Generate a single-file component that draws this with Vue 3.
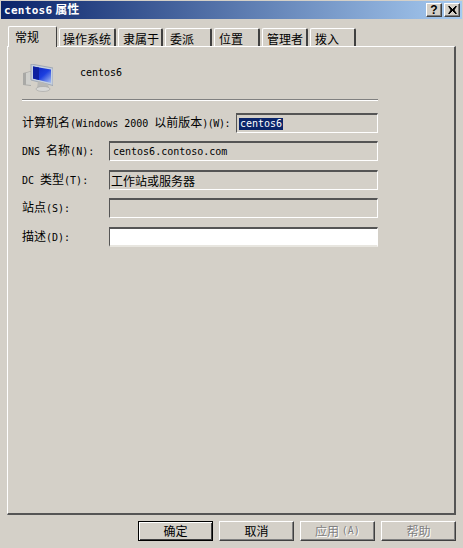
<script setup>
const tabs = [
  { label: '常规', w: 49, active: true },
  { label: '操作系统', w: 57 },
  { label: '隶属于', w: 45 },
  { label: '委派', w: 47 },
  { label: '位置', w: 46 },
  { label: '管理者', w: 46 },
  { label: '拨入', w: 46 }
]
</script>

<template>
  <div class="win">
    <div class="title">
      <div class="title-text"><span class="en bold">centos6</span> <span class="cn">属性</span></div>
      <div class="ctl-wrap">
        <div class="ctl">?</div>
        <div class="ctl x-ctl">
          <svg width="9" height="8" viewBox="0 0 9 8"><path d="M0 0h2v1h1v1h1v1h1V2h1V1h1V0h2L6.500 4 9 8H7V7H6V6H5V5H4v1H3v1H2v1H0l2.500-4z" fill="#000"/></svg>
        </div>
      </div>
    </div>

    <div class="tabs">
      <div v-for="t in tabs" :key="t.label" class="tab" :class="{ active: t.active }" :style="{ width: t.w + 'px' }">{{ t.label }}</div>
    </div>

    <div class="panel">
      <div class="head">
        <svg class="pc" width="30" height="28" viewBox="0 0 30 28">
          <defs>
            <linearGradient id="scr" x1="0" y1="0" x2="1" y2="1">
              <stop offset="0" stop-color="#0a1fb8"/>
              <stop offset="0.55" stop-color="#1c3fe0"/>
              <stop offset="1" stop-color="#a9c0f0"/>
            </linearGradient>
          </defs>
          <path d="M0 9l8-2v15l-8-1z" fill="#a9a9a6"/>
          <path d="M3 9l5-1.500V21l-5-.500z" fill="#d0d0cc"/>
          <path d="M8 0l22 4v17.500L8 16z" fill="#c6d0de" stroke="#8d97a8" stroke-width="0.700"/>
          <path d="M10 2.500l18 3V19L10 14.500z" fill="url(#scr)"/>
          <path d="M10 2.500l6 1V16l-6-1.500z" fill="#0d20a0"/>
          <path d="M15 17l10 3 1 4H14z" fill="#b8b8b6"/>
          <ellipse cx="20" cy="25" rx="7" ry="2.500" fill="#d8d8d6" stroke="#a4a4a2" stroke-width="0.600"/>
        </svg>
        <span class="en name">centos6</span>
      </div>
      <div class="divider"></div>

      <div class="row first">
        <label class="lab"><span class="cn">计算机名</span><span class="en">(Windows 2000 </span><span class="cn">以前版本</span><span class="en tight">)(W):</span></label>
        <div class="field short"><span class="en sel">centos6</span></div>
      </div>
      <div class="row r8">
        <label class="lab"><span class="en">DNS </span><span class="cn">名称</span><span class="en">(N):</span></label>
        <div class="field wide"><span class="en val">centos6.contoso.com</span></div>
      </div>
      <div class="row r9">
        <label class="lab"><span class="en">DC </span><span class="cn">类型</span><span class="en">(T):</span></label>
        <div class="field wide"><span class="cn">工作站或服务器</span></div>
      </div>
      <div class="row r8">
        <label class="lab"><span class="cn">站点</span><span class="en">(S):</span></label>
        <div class="field wide"></div>
      </div>
      <div class="row r9">
        <label class="lab"><span class="cn">描述</span><span class="en">(D):</span></label>
        <div class="field wide white"></div>
      </div>
    </div>

    <div class="buttons">
      <div class="btn default">确定</div>
      <div class="btn">取消</div>
      <div class="btn off">应用 <span class="en">(A)</span></div>
      <div class="btn off">帮助</div>
    </div>
  </div>
</template>

<style>
html, body { margin: 0; background: #d4d0c8; }
</style>

<style scoped>
.win {
  width: 463px;
  height: 548px;
  box-sizing: border-box;
  padding: 1px 1px 0;
  background: #d4d0c8;
  color: #000;
  font-family: "Noto Sans CJK SC", "DejaVu Sans Mono", sans-serif;
  font-size: 12px;
  display: flex;
  flex-direction: column;
  overflow: hidden;
}
.en { font-family: "DejaVu Sans Mono", "Liberation Mono", monospace; font-size: 10px; }
.cn { font-family: "Noto Sans CJK SC", sans-serif; font-size: 12px; }
.bold { font-weight: 700; font-size: 11px; letter-spacing: 0.300px; }
.tight { letter-spacing: -0.500px; }

.title {
  height: 18px;
  width: 461px;
  flex: none;
  display: flex;
  align-items: center;
  justify-content: space-between;
  background: linear-gradient(90deg, #0a246a, #a6caf0);
  color: #fff;
}
.title-text { padding-left: 3px; font-weight: 700; line-height: 18px; white-space: pre; }
.title-text .cn { font-weight: 700; font-size: 12px; }
.ctl-wrap { display: flex; gap: 2px; padding-right: 2px; }
.ctl {
  width: 16px;
  height: 14px;
  box-sizing: border-box;
  background: #d4d0c8;
  color: #000;
  border: 1px solid;
  border-color: #fff #404040 #404040 #fff;
  box-shadow: inset -1px -1px 0 #808080;
  font: 700 12px/12px "Liberation Sans", sans-serif;
  text-align: center;
}
.x-ctl { display: flex; align-items: center; justify-content: center; }

.tabs {
  display: flex;
  align-items: flex-end;
  gap: 2px;
  height: 27px;
  margin-left: 7px;
  flex: none;
  position: relative;
  z-index: 1;
}
.tab {
  height: 18px;
  box-sizing: border-box;
  border-top: 1px solid #fff;
  border-left: 1px solid #fff;
  border-right: 2px solid #404040;
  border-radius: 2px 2px 0 0;
  padding: 2px 0 0 4px;
  line-height: 15px;
  white-space: nowrap;
}
.tab:nth-child(2) { padding-left: 3px; }
.tab.active {
  height: 21px;
  padding: 1px 0 0 6px;
  margin-bottom: -1px;
  border-right: 1px solid #404040;
  background: #d4d0c8;
  line-height: 17px;
}

.panel {
  width: 449px;
  height: 469px;
  margin-left: 6px;
  flex: none;
  box-sizing: border-box;
  border-top: 1px solid #fff;
  border-left: 1px solid #fff;
  border-right: 2px solid #555;
  border-bottom: 2px solid #555;
  padding: 0 0 0 14px;
}
.head {
  display: flex;
  align-items: flex-start;
  height: 52px;
}
.pc { margin: 17px 0 0 1px; flex: none; }
.name { margin: 19px 0 0 27px; line-height: 13px; }
.divider {
  width: 356px;
  height: 2px;
  background: linear-gradient(#808080 50%, #fff 50%);
}
.row {
  width: 356px;
  height: 20px;
  display: flex;
  align-items: center;
  justify-content: space-between;
}
.first { margin-top: 12px; }
.r8 { margin-top: 8px; }
.r9 { margin-top: 9px; }
.lab { white-space: pre; line-height: 18px; height: 20px; }
.field {
  height: 20px;
  box-sizing: border-box;
  background: #d4d0c8;
  border-top: 2px solid #555;
  border-left: 1px solid #555;
  border-right: 1px solid #fff;
  border-bottom: 1px solid #fff;
  display: flex;
  align-items: center;
  padding-left: 1px;
  line-height: 14px;
  white-space: nowrap;
}
.short { width: 142px; }
.wide { width: 269px; }
.white { background: #fff; border-bottom: 2px solid #e8e6e0; }
.sel { background: #0a246a; color: #fff; padding: 0 1px; margin-left: 1px; line-height: 12px; }
.val { padding-left: 2px; }

.buttons {
  display: flex;
  gap: 6px;
  margin: 6px 0 0 137px;
  flex: none;
}
.btn {
  width: 75px;
  height: 20px;
  box-sizing: border-box;
  border: 1px solid;
  border-color: #fff #404040 #404040 #fff;
  box-shadow: inset -1px -1px 0 #808080;
  display: flex;
  align-items: center;
  justify-content: center;
  white-space: pre;
  line-height: 16px;
}
.default {
  border: 1px solid #000;
  box-shadow: inset 1px 1px 0 #fff, inset -1px -1px 0 #404040;
}
.off { color: #808080; text-shadow: 1px 1px 0 #fff; }
</style>
